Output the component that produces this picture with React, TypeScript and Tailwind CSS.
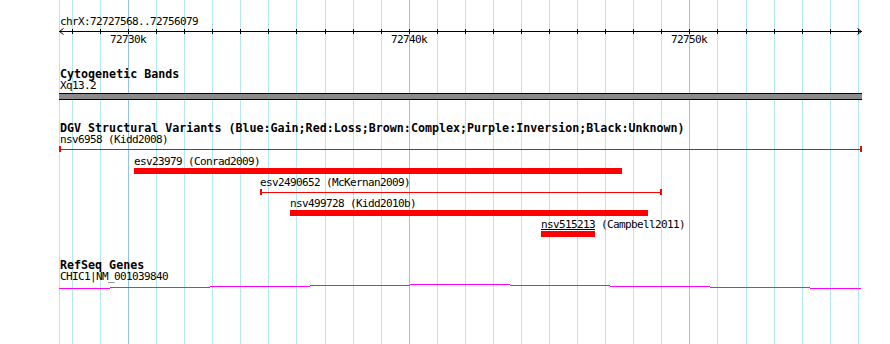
const GRID = [59, 72, 100, 128, 156, 184, 212, 240, 268, 296, 325, 353, 381, 409, 437, 465, 493, 521, 549, 577, 605, 633, 661, 689, 717, 746, 774, 802, 830, 858];
const MAJOR = [128, 409, 689];
const TICKS = GRID.slice(1);

const LABELS = [
  { x: 110, text: "72730k" },
  { x: 391, text: "72740k" },
  { x: 671, text: "72750k" },
];

// refseq gene drawn as a stepped line: [width, offset from top]
const GENE = [
  [51, 4],
  [100, 3],
  [100, 2],
  [100, 1],
  [100, 0],
  [100, 1],
  [100, 2],
  [100, 3],
  [51, 4],
];

function Ruler() {
  return (
    <div className="relative h-[48px]">
      <svg className="absolute left-0 top-0" width="890" height="48">
        <line x1="59" y1="31.5" x2="862" y2="31.5" stroke="#000" strokeWidth="1" />
        <polyline points="63.5,28.5 59.5,31.5 63.5,34.5" fill="none" stroke="#000" strokeWidth="1" />
        <polyline points="857.5,28.5 861.5,31.5 857.5,34.5" fill="none" stroke="#000" strokeWidth="1" />
        {TICKS.map((x) => (
          <line key={x} x1={x + 0.5} y1="29" x2={x + 0.5} y2="34" stroke="#000" strokeWidth="1" />
        ))}
      </svg>
      <div className="relative pt-[16px] pl-[60px] text-[11px] tracking-[-0.62px] leading-[11px]">chrX:72727568..72756079</div>
      {LABELS.map((l) => (
        <div key={l.x} className="absolute top-[34px] text-[11px] tracking-[-0.62px] leading-[11px]" style={{ left: l.x }}>
          {l.text}
        </div>
      ))}
    </div>
  );
}

function Title({ children }: { children: React.ReactNode }) {
  return <div className="ml-[60px] text-[11.67px] leading-[12px] font-bold">{children}</div>;
}

function Label({ x, children }: { x: number; children: React.ReactNode }) {
  return (
    <div className="text-[11px] tracking-[-0.62px] leading-[11px] whitespace-nowrap" style={{ marginLeft: x }}>
      {children}
    </div>
  );
}

function Span({ x, w }: { x: number; w: number }) {
  // thin feature with end ticks
  return (
    <div className="flex h-[6px] mt-[1px]" style={{ marginLeft: x, width: w }}>
      <div className="w-[2px] h-[6px] bg-[#ff0000]" />
      <div className="flex-1 h-px mt-[3px] bg-[#ff0000]" />
      <div className="w-[2px] h-[6px] bg-[#ff0000]" />
    </div>
  );
}

function Bar({ x, w }: { x: number; w: number }) {
  return <div className="h-[6px] mt-[1px] bg-[#ff0000]" style={{ marginLeft: x, width: w }} />;
}

export default function App() {
  return (
    <div className="relative w-[890px] h-[344px] overflow-hidden bg-white text-black font-['DejaVu_Sans_Mono','Liberation_Mono',monospace]">
      {GRID.map((x) => (
        <div
          key={x}
          className={`absolute top-0 bottom-0 w-px ${MAJOR.includes(x) ? "bg-[#92c4ec]" : "bg-[#b2e8f0]"}`}
          style={{ left: x }}
        />
      ))}

      <div className="relative">
        <Ruler />

        <div className="mt-[20px]">
          <Title>Cytogenetic Bands</Title>
          <Label x={60}>Xq13.2</Label>
          <div className="ml-[59px] w-[803px] h-[7px] mt-[2px] border-y border-black bg-[#8a8a8a]" />
        </div>

        <div className="mt-[22px]">
          <Title>DGV Structural Variants (Blue:Gain;Red:Loss;Brown:Complex;Purple:Inversion;Black:Unknown)</Title>
          <Label x={60}>nsv6958 (Kidd2008)</Label>
          <Span x={59} w={803} />

          <div className="mt-[4px]">
            <Label x={134}>esv23979 (Conrad2009)</Label>
            <Bar x={134} w={488} />
          </div>

          <div className="mt-[3px]">
            <Label x={260}>esv2490652 (McKernan2009)</Label>
            <Span x={260} w={402} />
          </div>

          <div className="mt-[3px]">
            <Label x={290}>nsv499728 (Kidd2010b)</Label>
            <Bar x={290} w={358} />
          </div>

          <div className="mt-[3px]">
            <Label x={541}>
              <span className="underline decoration-1 underline-offset-[1px]">nsv515213</span> (Campbell2011)
            </Label>
            <Bar x={541} w={54} />
          </div>
        </div>

        <div className="mt-[22px]">
          <Title>RefSeq Genes</Title>
          <Label x={60}>CHIC1|NM_001039840</Label>
          <div className="flex items-start ml-[59px] mt-[2px] h-[5px]">
            {GENE.map(([w, y], i) => (
              <div key={i} className="h-px bg-[#ff00ff]" style={{ width: w, marginTop: y }} />
            ))}
          </div>
        </div>
      </div>
    </div>
  );
}
